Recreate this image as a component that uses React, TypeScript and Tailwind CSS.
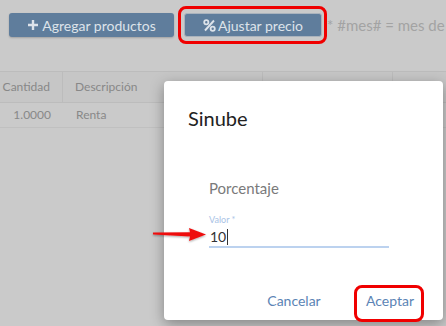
import React from 'react'

const font = { fontFamily: 'Lato, "Open Sans", sans-serif' }

function PlusIcon() {
  return (
    <svg width="12" height="12" viewBox="0 0 12 12" className="mr-[3px]">
      <path d="M6 1v10M1 6h10" stroke="currentColor" strokeWidth="2.4" />
    </svg>
  )
}

function PercentIcon() {
  return (
    <svg width="13" height="13" viewBox="0 0 13 13" className="mr-[2px]">
      <circle cx="3.3" cy="3.3" r="2.1" fill="none" stroke="currentColor" strokeWidth="1.8" />
      <circle cx="9.7" cy="9.7" r="2.1" fill="none" stroke="currentColor" strokeWidth="1.8" />
      <path d="M11 1.5 2 11.5" stroke="currentColor" strokeWidth="1.9" />
    </svg>
  )
}

function RedArrow() {
  return (
    <svg width="60" height="20" viewBox="0 0 60 20" className="absolute left-[150px] top-[225px]">
      <defs>
        <filter id="sh" x="-20%" y="-50%" width="140%" height="200%">
          <feDropShadow dx="0" dy="1" stdDeviation="0.9" floodColor="#000" floodOpacity="0.35" />
        </filter>
      </defs>
      <g filter="url(#sh)">
        <path d="M3 7.6 L40 7.2 L39 3 L56 9.5 L39 16 L40 11.4 L3 9.6 Z" fill="#ee1111" />
      </g>
    </svg>
  )
}

export default function App() {
  return (
    <div className="relative w-[446px] h-[326px] overflow-hidden bg-[#cacaca]" style={font}>
      {/* toolbar */}
      <div className="flex items-center pt-[13px] pl-[9px] gap-[10px]">
        <button className="flex items-center justify-center w-[165px] h-[24px] rounded-[3px] bg-[#5f7d9c] text-[#dde3ea] text-[14px] shadow-[0_1px_2px_rgba(0,0,0,0.2)]">
          <PlusIcon />
          Agregar productos
        </button>
        <button className="flex items-center justify-center w-[138px] h-[24px] rounded-[3px] bg-[#5f7d9c] text-[#dde3ea] text-[14px] border border-[#aab3bd]">
          <PercentIcon />
          Ajustar precio
        </button>
        <span className="ml-[-5px] text-[15px] text-[#a3a3a3] whitespace-nowrap">* #mes# = mes de</span>
      </div>

      {/* table */}
      <div className="mt-[34px] text-[12px] text-[#888]">
        <div className="flex h-[32px] border-t border-b border-[#bcbcbc] bg-[#c6c6c6]">
          <div className="w-[63px] shrink-0 flex items-center justify-end pr-[12px] border-r border-[#bcbcbc] whitespace-nowrap">Cantidad</div>
          <div className="w-[200px] shrink-0 flex items-center pl-[12px] border-r border-[#bcbcbc]">Descripción</div>
          <div className="w-[130px] shrink-0 border-r border-[#bcbcbc]" />
          <div className="flex-1" />
        </div>
        <div className="flex h-[25px] border-b border-[#c0c0c0]">
          <div className="w-[63px] flex items-center justify-end pr-[12px]">1.0000</div>
          <div className="flex items-center pl-[13px]">Renta</div>
        </div>
      </div>

      {/* dialog */}
      <div className="absolute left-[164px] top-[81px] w-[279px] h-[239px] bg-white rounded-[4px] shadow-[0_4px_14px_rgba(0,0,0,0.35)] flex flex-col">
        <div className="pl-[24px] pt-[23px] text-[20px] leading-[28px] text-[#222]">Sinube</div>
        <div className="pl-[45px] pr-[54px] mt-[46px]">
          <div className="text-[15px] leading-[20px] text-[#7a7a7a]">Porcentaje</div>
          <div className="mt-[16px] text-[9px] leading-[12px] text-[#a9c3e6]">Valor *</div>
          <div className="mt-[2px] h-[20px] border-b-2 border-[#bcd2ef] flex items-start text-[14px] leading-[18px] text-[#333] pl-px">
            10<span className="w-px h-[16px] bg-[#333] ml-px mt-px" />
          </div>
        </div>
        <div className="mt-auto mb-[9px] flex justify-end items-center pr-[23px] gap-[36px] text-[14px] leading-[20px] text-[#5b84b5]">
          <span className="w-[60px] text-center">Cancelar</span>
          <span className="w-[60px] text-center">Aceptar</span>
        </div>
      </div>

      {/* annotations */}
      <div className="absolute left-[178px] top-[6px] w-[149px] h-[38px] border-[3px] border-[#f00000] rounded-[8px]" />
      <div className="absolute left-[354px] top-[285px] w-[70px] h-[37px] border-[3px] border-[#f00000] rounded-[8px]" />
      <RedArrow />
    </div>
  )
}
